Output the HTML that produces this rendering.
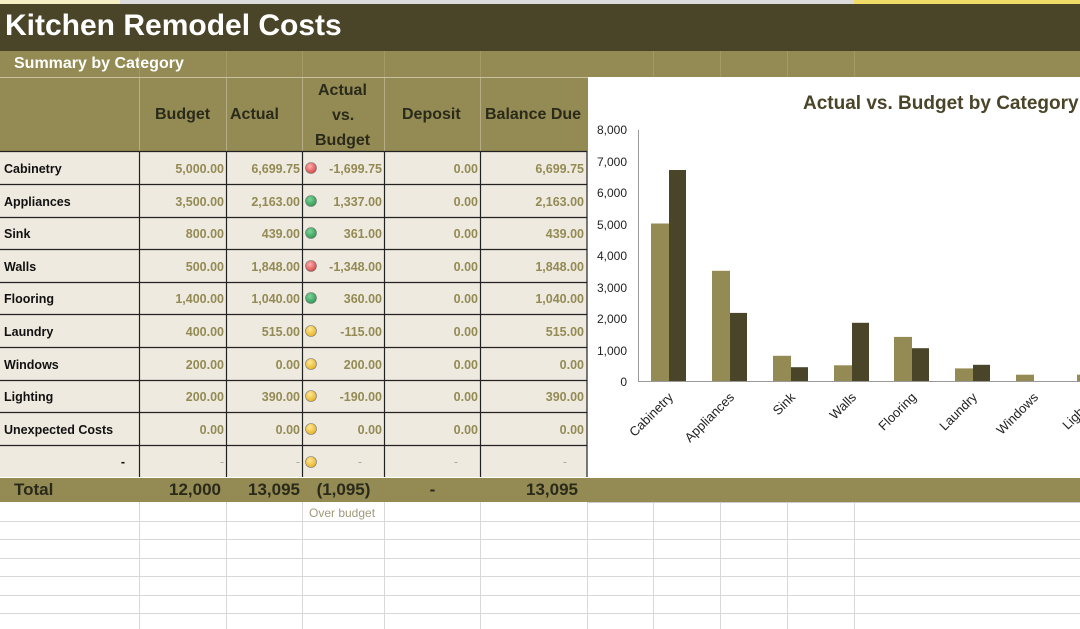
<!DOCTYPE html>
<html><head><meta charset="utf-8"><style>
*{margin:0;padding:0;box-sizing:border-box}
body{width:1080px;height:629px;overflow:hidden;background:#fff;font-family:"Liberation Sans",sans-serif;position:relative}
.a{position:absolute}
.t{position:absolute;white-space:nowrap}
</style></head><body>
<div class="a" style="left:0;top:0;width:1080px;height:4px;background:#dcdcdc"></div>
<div class="a" style="left:0;top:0;width:120px;height:4px;background:#f6eec4"></div>
<div class="a" style="left:854px;top:0;width:226px;height:4px;background:#f2dc68"></div>
<div class="a" style="left:0;top:4px;width:1080px;height:47px;background:#4a4529"></div>
<div class="t" style="left:5px;top:9px;font-size:30px;font-weight:bold;color:#fff;letter-spacing:0px">Kitchen Remodel Costs</div>
<div class="a" style="left:0;top:51px;width:1080px;height:26px;background:#948a54"></div>
<div class="t" style="left:14px;top:55px;font-size:16px;font-weight:bold;color:#fff">Summary by Category</div>
<svg class="a" style="left:0;top:0" width="1080" height="629">
<g stroke="#d8d8d8" stroke-width="1">
<line x1="0" y1="521.5" x2="1080" y2="521.5"/><line x1="0" y1="539.5" x2="1080" y2="539.5"/><line x1="0" y1="558.5" x2="1080" y2="558.5"/><line x1="0" y1="576.5" x2="1080" y2="576.5"/><line x1="0" y1="595.5" x2="1080" y2="595.5"/><line x1="0" y1="613.5" x2="1080" y2="613.5"/>
<line x1="139.5" y1="502" x2="139.5" y2="629"/><line x1="226.5" y1="502" x2="226.5" y2="629"/><line x1="302.5" y1="502" x2="302.5" y2="629"/><line x1="384.5" y1="502" x2="384.5" y2="629"/><line x1="480.5" y1="502" x2="480.5" y2="629"/><line x1="587.5" y1="502" x2="587.5" y2="629"/><line x1="653.5" y1="502" x2="653.5" y2="629"/><line x1="720.5" y1="502" x2="720.5" y2="629"/><line x1="787.5" y1="502" x2="787.5" y2="629"/><line x1="854.5" y1="502" x2="854.5" y2="629"/>
</g>
<g stroke="#a49a66" stroke-width="1">
<line x1="139.5" y1="51" x2="139.5" y2="77"/><line x1="226.5" y1="51" x2="226.5" y2="77"/><line x1="302.5" y1="51" x2="302.5" y2="77"/><line x1="384.5" y1="51" x2="384.5" y2="77"/><line x1="480.5" y1="51" x2="480.5" y2="77"/><line x1="653.5" y1="51" x2="653.5" y2="77"/><line x1="720.5" y1="51" x2="720.5" y2="77"/><line x1="787.5" y1="51" x2="787.5" y2="77"/><line x1="854.5" y1="51" x2="854.5" y2="77"/>
</g>
</svg>
<div class="a" style="left:0;top:77px;width:588px;height:74px;background:#948a54;border-top:1px solid #c8c2a0"></div>
<svg class="a" style="left:0;top:0" width="590" height="510">
<g stroke="#b5ad85"><line x1="139.5" y1="78" x2="139.5" y2="151"/><line x1="226.5" y1="78" x2="226.5" y2="151"/><line x1="302.5" y1="78" x2="302.5" y2="151"/><line x1="384.5" y1="78" x2="384.5" y2="151"/><line x1="480.5" y1="78" x2="480.5" y2="151"/></g>
<rect x="0" y="151" width="587" height="326" fill="#eeeadf"/>
<g stroke="#222" stroke-width="1.2">
<line x1="0" y1="151.5" x2="587" y2="151.5"/><line x1="0" y1="184.5" x2="587" y2="184.5"/><line x1="0" y1="217.5" x2="587" y2="217.5"/><line x1="0" y1="249.5" x2="587" y2="249.5"/><line x1="0" y1="282.5" x2="587" y2="282.5"/><line x1="0" y1="314.5" x2="587" y2="314.5"/><line x1="0" y1="347.5" x2="587" y2="347.5"/><line x1="0" y1="380.5" x2="587" y2="380.5"/><line x1="0" y1="412.5" x2="587" y2="412.5"/><line x1="0" y1="445.5" x2="587" y2="445.5"/>
<line x1="139.5" y1="151" x2="139.5" y2="477"/><line x1="226.5" y1="151" x2="226.5" y2="477"/><line x1="302.5" y1="151" x2="302.5" y2="477"/><line x1="384.5" y1="151" x2="384.5" y2="477"/><line x1="480.5" y1="151" x2="480.5" y2="477"/><line x1="587" y1="151" x2="587" y2="477"/>
</g>
<defs>
<radialGradient id="r" cx="40%" cy="35%" r="65%"><stop offset="0" stop-color="#ffb0b0"/><stop offset="1" stop-color="#d84848"/></radialGradient>
<radialGradient id="g" cx="40%" cy="35%" r="65%"><stop offset="0" stop-color="#7fd49a"/><stop offset="1" stop-color="#2f9a54"/></radialGradient>
<radialGradient id="y" cx="40%" cy="35%" r="65%"><stop offset="0" stop-color="#ffe79a"/><stop offset="1" stop-color="#e8b420"/></radialGradient>
</defs>
<g stroke="#777" stroke-width="0.6">
<circle cx="311" cy="168" r="5.5" fill="url(#r)"/>
<circle cx="311" cy="201" r="5.5" fill="url(#g)"/>
<circle cx="311" cy="233" r="5.5" fill="url(#g)"/>
<circle cx="311" cy="266" r="5.5" fill="url(#r)"/>
<circle cx="311" cy="298" r="5.5" fill="url(#g)"/>
<circle cx="311" cy="331" r="5.5" fill="url(#y)"/>
<circle cx="311" cy="364" r="5.5" fill="url(#y)"/>
<circle cx="311" cy="396" r="5.5" fill="url(#y)"/>
<circle cx="311" cy="429" r="5.5" fill="url(#y)"/>
<circle cx="311" cy="462" r="5.5" fill="url(#y)"/>
</g>
</svg>
<div style="position:absolute;left:0;top:0;font-weight:bold;color:#2a2a1a;font-size:16px">
<div class="t" style="left:155px;top:106px">Budget</div>
<div class="t" style="left:230px;top:106px">Actual</div>
<div class="t" style="left:318px;top:82px">Actual</div>
<div class="t" style="left:332px;top:107px">vs.</div>
<div class="t" style="left:315px;top:132px">Budget</div>
<div class="t" style="left:402px;top:106px">Deposit</div>
<div class="t" style="left:485px;top:106px">Balance Due</div>
</div>
<div style="position:absolute;left:0;top:0;font-size:12.5px;font-weight:bold">
<div style="position:absolute;left:4px;top:161px;line-height:16px;color:#111">
<div style="height:32.6px">Cabinetry</div><div style="height:32.6px">Appliances</div><div style="height:32.6px">Sink</div><div style="height:32.6px">Walls</div><div style="height:32.6px">Flooring</div><div style="height:32.6px">Laundry</div><div style="height:32.6px">Windows</div><div style="height:32.6px">Lighting</div><div style="height:32.6px">Unexpected Costs</div><div style="height:32.6px;width:121px;text-align:right">-</div>
</div>
<div style="position:absolute;left:140px;width:84px;top:161px;line-height:16px;color:#948a54;text-align:right">
<div style="height:32.6px">5,000.00</div><div style="height:32.6px">3,500.00</div><div style="height:32.6px">800.00</div><div style="height:32.6px">500.00</div><div style="height:32.6px">1,400.00</div><div style="height:32.6px">400.00</div><div style="height:32.6px">200.00</div><div style="height:32.6px">200.00</div><div style="height:32.6px">0.00</div><div style="height:32.6px;font-weight:normal;color:#aaa">-</div>
</div>
<div style="position:absolute;left:227px;width:73px;top:161px;line-height:16px;color:#948a54;text-align:right">
<div style="height:32.6px">6,699.75</div><div style="height:32.6px">2,163.00</div><div style="height:32.6px">439.00</div><div style="height:32.6px">1,848.00</div><div style="height:32.6px">1,040.00</div><div style="height:32.6px">515.00</div><div style="height:32.6px">0.00</div><div style="height:32.6px">390.00</div><div style="height:32.6px">0.00</div><div style="height:32.6px;font-weight:normal;color:#aaa">-</div>
</div>
<div style="position:absolute;left:303px;width:79px;top:161px;line-height:16px;color:#948a54;text-align:right">
<div style="height:32.6px">-1,699.75</div><div style="height:32.6px">1,337.00</div><div style="height:32.6px">361.00</div><div style="height:32.6px">-1,348.00</div><div style="height:32.6px">360.00</div><div style="height:32.6px">-115.00</div><div style="height:32.6px">200.00</div><div style="height:32.6px">-190.00</div><div style="height:32.6px">0.00</div><div style="height:32.6px;font-weight:normal;color:#aaa;padding-right:20px">-</div>
</div>
<div style="position:absolute;left:385px;width:93px;top:161px;line-height:16px;color:#948a54;text-align:right">
<div style="height:32.6px">0.00</div><div style="height:32.6px">0.00</div><div style="height:32.6px">0.00</div><div style="height:32.6px">0.00</div><div style="height:32.6px">0.00</div><div style="height:32.6px">0.00</div><div style="height:32.6px">0.00</div><div style="height:32.6px">0.00</div><div style="height:32.6px">0.00</div><div style="height:32.6px;font-weight:normal;color:#aaa;padding-right:20px">-</div>
</div>
<div style="position:absolute;left:481px;width:103px;top:161px;line-height:16px;color:#948a54;text-align:right">
<div style="height:32.6px">6,699.75</div><div style="height:32.6px">2,163.00</div><div style="height:32.6px">439.00</div><div style="height:32.6px">1,848.00</div><div style="height:32.6px">1,040.00</div><div style="height:32.6px">515.00</div><div style="height:32.6px">0.00</div><div style="height:32.6px">390.00</div><div style="height:32.6px">0.00</div><div style="height:32.6px;font-weight:normal;color:#aaa;padding-right:17px">-</div>
</div>
</div>
<div class="a" style="left:0;top:478px;width:1080px;height:24px;background:#948a54"></div>
<div class="a" style="left:587px;top:502px;width:493px;height:1px;background:#ccc"></div>
<div style="position:absolute;left:0;top:480px;font-size:17px;font-weight:bold;color:#2a2a1a;line-height:20px">
<div class="t" style="left:14px;top:0">Total</div>
<div class="t" style="left:140px;width:81px;text-align:right">12,000</div>
<div class="t" style="left:227px;width:73px;text-align:right">13,095</div>
<div class="t" style="left:303px;width:81px;text-align:center">(1,095)</div>
<div class="t" style="left:385px;width:95px;text-align:center">-</div>
<div class="t" style="left:481px;width:97px;text-align:right">13,095</div>
</div>
<div class="t" style="left:309px;top:506px;font-size:12px;color:#a09a7a">Over budget</div>
<svg class="a" style="left:0;top:0" width="1080" height="629">
<rect x="589" y="78" width="491" height="399" fill="#fff"/>
<text x="803" y="109" font-family="Liberation Sans,sans-serif" font-size="19" font-weight="bold" fill="#4a4529">Actual vs. Budget by Category</text>
<g font-family="Liberation Sans,sans-serif" font-size="12" fill="#222" text-anchor="end">
<text x="627" y="134">8,000</text><text x="627" y="166">7,000</text><text x="627" y="197">6,000</text><text x="627" y="229">5,000</text><text x="627" y="260">4,000</text><text x="627" y="292">3,000</text><text x="627" y="323">2,000</text><text x="627" y="355">1,000</text><text x="627" y="386">0</text>
</g>
<line x1="638.5" y1="130" x2="638.5" y2="381" stroke="#999"/>
<line x1="638" y1="381.5" x2="1080" y2="381.5" stroke="#999"/>
<g fill="#948a54">
<rect x="651" y="223.5" width="18" height="157.5"/><rect x="712" y="270.8" width="18" height="110.2"/><rect x="773" y="355.8" width="18" height="25.2"/><rect x="834" y="365.3" width="18" height="15.7"/><rect x="894" y="336.9" width="18" height="44.1"/><rect x="955" y="368.4" width="18" height="12.6"/><rect x="1016" y="374.7" width="18" height="6.3"/><rect x="1077" y="374.7" width="18" height="6.3"/>
</g>
<g fill="#4a4529">
<rect x="669" y="170" width="17" height="211"/><rect x="730" y="312.9" width="17" height="68.1"/><rect x="791" y="367.2" width="17" height="13.8"/><rect x="852" y="322.8" width="17" height="58.2"/><rect x="912" y="348.2" width="17" height="32.8"/><rect x="973" y="364.8" width="17" height="16.2"/>
</g>
<g font-family="Liberation Sans,sans-serif" font-size="13" fill="#222" text-anchor="end">
<text transform="translate(674,398) rotate(-45)">Cabinetry</text>
<text transform="translate(735,398) rotate(-45)">Appliances</text>
<text transform="translate(796,398) rotate(-45)">Sink</text>
<text transform="translate(857,398) rotate(-45)">Walls</text>
<text transform="translate(917,398) rotate(-45)">Flooring</text>
<text transform="translate(978,398) rotate(-45)">Laundry</text>
<text transform="translate(1039,398) rotate(-45)">Windows</text>
<text transform="translate(1100,398) rotate(-45)">Lighting</text>
</g>
</svg>
</body></html>
